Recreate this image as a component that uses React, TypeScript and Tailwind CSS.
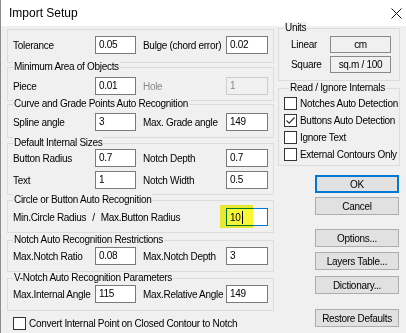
import { ReactNode } from "react";

const font = { fontFamily: '"Liberation Sans", Arial, sans-serif' };

function Group(props: { title?: string; className: string; children: ReactNode }) {
  const { title, className, children } = props;
  return (
    <div className={`border border-[#dcdcdc] ${className}`}>
      {title && (
        <div className="-mt-[7px] ml-[5px] w-fit bg-[#f0f0f0] px-[1px] leading-[12px]">{title}</div>
      )}
      {children}
    </div>
  );
}

function Field(props: { value: string; w: string; disabled?: boolean }) {
  const { value, w, disabled } = props;
  return (
    <div
      className={`${w} h-[18px] border pl-[3px] leading-[16px] ${
        disabled ? "border-[#cccccc] bg-[#f0f0f0] text-[#8a8a8a]" : "border-[#7a7a7a] bg-white"
      }`}
    >
      {value}
    </div>
  );
}

function Row(props: { a: string; av: string; b?: string; bv?: string; disabled?: boolean; className?: string }) {
  const { a, av, b, bv, disabled, className } = props;
  return (
    <div className={`flex items-center pl-[5px] ${className ?? ""}`}>
      <div className="w-[82px]">{a}</div>
      <Field value={av} w="w-[41px]" />
      {b && (
        <>
          <div className={`ml-[7px] w-[83px] ${disabled ? "text-[#8a8a8a]" : ""}`}>{b}</div>
          <Field value={bv ?? ""} w="w-[42px]" disabled={disabled} />
        </>
      )}
    </div>
  );
}

function Check(props: { label: string; checked?: boolean; className?: string }) {
  const { label, checked, className } = props;
  return (
    <div className={`flex h-[17px] items-center ${className ?? ""}`}>
      <div className="flex h-[13px] w-[13px] shrink-0 items-center justify-center border border-[#333333] bg-white">
        {checked && (
          <svg width="11" height="11" viewBox="0 0 11 11">
            <path d="M1.5 5.5 L4.2 8.2 L9.5 2.5" fill="none" stroke="#333" strokeWidth="1.2" />
          </svg>
        )}
      </div>
      <span className="ml-[3px]">{label}</span>
    </div>
  );
}

function Btn(props: { label: string; primary?: boolean; className?: string }) {
  const { label, primary, className } = props;
  return (
    <div
      className={`flex h-[18px] w-[84px] items-center justify-center bg-[#e1e1e1] ${
        primary ? "border-2 border-[#0078d7]" : "border border-[#adadad]"
      } ${className ?? ""}`}
    >
      {label}
    </div>
  );
}

export default function App() {
  return (
    <div
      className="h-[333px] w-[406px] overflow-hidden whitespace-nowrap border-l border-[#8c8c8c] bg-[#f0f0f0] text-[10px] leading-[13px] tracking-[-0.3px] text-black"
      style={font}
    >
      <div className="flex h-[26px] items-center justify-between bg-white pl-[8px] pr-[4px] tracking-normal">
        <span className="text-[12px]">Import Setup</span>
        <svg width="11" height="11" viewBox="0 0 11 11">
          <path d="M0.5 0.5 L10.5 10.5 M10.5 0.5 L0.5 10.5" stroke="#111" strokeWidth="1" />
        </svg>
      </div>

      <div className="flex pl-[6px]">
        <div className="w-[267px]">
          <Group className="mt-[3px] h-[34px] pt-[6px]">
            <Row a="Tolerance" av="0.05" b="Bulge (chord error)" bv="0.02" />
          </Group>
          <Group title="Minimum Area of Objects" className="mt-[4px] h-[34px]">
            <Row a="Piece" av="0.01" b="Hole" bv="1" disabled className="mt-[4px]" />
          </Group>
          <Group title="Curve and Grade Points Auto Recognition" className="mt-[3px] h-[34px]">
            <Row a="Spline angle" av="3" b="Max. Grade angle" bv="149" className="mt-[3px]" />
          </Group>
          <Group title="Default Internal Sizes" className="mt-[5px] h-[52px]">
            <Row a="Button Radius" av="0.7" b="Notch Depth" bv="0.7" />
            <Row a="Text" av="1" b="Notch Width" bv="0.5" className="mt-[4px]" />
          </Group>
          <Group title="Circle or Button Auto Recognition" className="mt-[5px] h-[33px]">
            <div className="mt-[2px] flex items-center pl-[5px]">
              <div className="flex w-[213px]">
                <span>Min.Circle Radius</span>
                <span className="mx-[6px]">/</span>
                <span>Max.Button Radius</span>
              </div>
              <div className="relative">
                <div className="flex h-[18px] w-[42px] items-center border border-[#0078d7] bg-white pl-[3px]">
                  <span>10</span>
                  <span className="ml-[1px] h-[13px] w-[1px] bg-black" />
                </div>
                <div className="absolute -left-[6px] -top-[3px] h-[23px] w-[33px] bg-[#f5f500] opacity-80 mix-blend-multiply" />
              </div>
            </div>
          </Group>
          <Group title="Notch Auto Recognition Restrictions" className="mt-[7px] h-[32px]">
            <Row a="Max.Notch Ratio" av="0.08" b="Max.Notch Depth" bv="3" className="mt-[1px]" />
          </Group>
          <Group title="V-Notch Auto Recognition Parameters" className="mt-[6px] h-[33px]">
            <Row a="Max.Internal Angle" av="115" b="Max.Relative Angle" bv="149" className="mt-[1px]" />
          </Group>
          <Check label="Convert Internal Point on Closed Contour to Notch" className="ml-[6px] mt-[4px]" />
        </div>

        <div className="ml-[4px] w-[122px]">
          <Group title="Units" className="mt-[2px] h-[53px]">
            <div className="mt-[2px] flex h-[17px] items-center">
              <div className="w-[51px] pl-[12px]">Linear</div>
              <div className="flex h-[17px] w-[61px] items-center justify-center border border-[#8a8a8a] bg-[#f0f0f0]">cm</div>
            </div>
            <div className="mt-[3px] flex h-[17px] items-center">
              <div className="w-[51px] pl-[12px]">Square</div>
              <div className="flex h-[17px] w-[61px] items-center justify-center border border-[#8a8a8a] bg-[#f0f0f0]">sq.m / 100</div>
            </div>
          </Group>
          <Group title="Read / Ignore Internals" className="mt-[7px] h-[78px] pl-[5px]">
            <Check label="Notches Auto Detection" className="mt-[1px]" />
            <Check label="Buttons Auto Detection" checked />
            <Check label="Ignore Text" />
            <Check label="External Contours Only" />
          </Group>
          <div className="flex flex-col pl-[37px]">
            <Btn label="OK" primary className="mt-[9px]" />
            <Btn label="Cancel" className="mt-[4px]" />
            <Btn label="Options..." className="mt-[14px]" />
            <Btn label="Layers Table..." className="mt-[5px]" />
            <Btn label="Dictionary..." className="mt-[6px]" />
            <Btn label="Restore Defaults" className="mt-[15px]" />
          </div>
        </div>
      </div>
    </div>
  );
}
